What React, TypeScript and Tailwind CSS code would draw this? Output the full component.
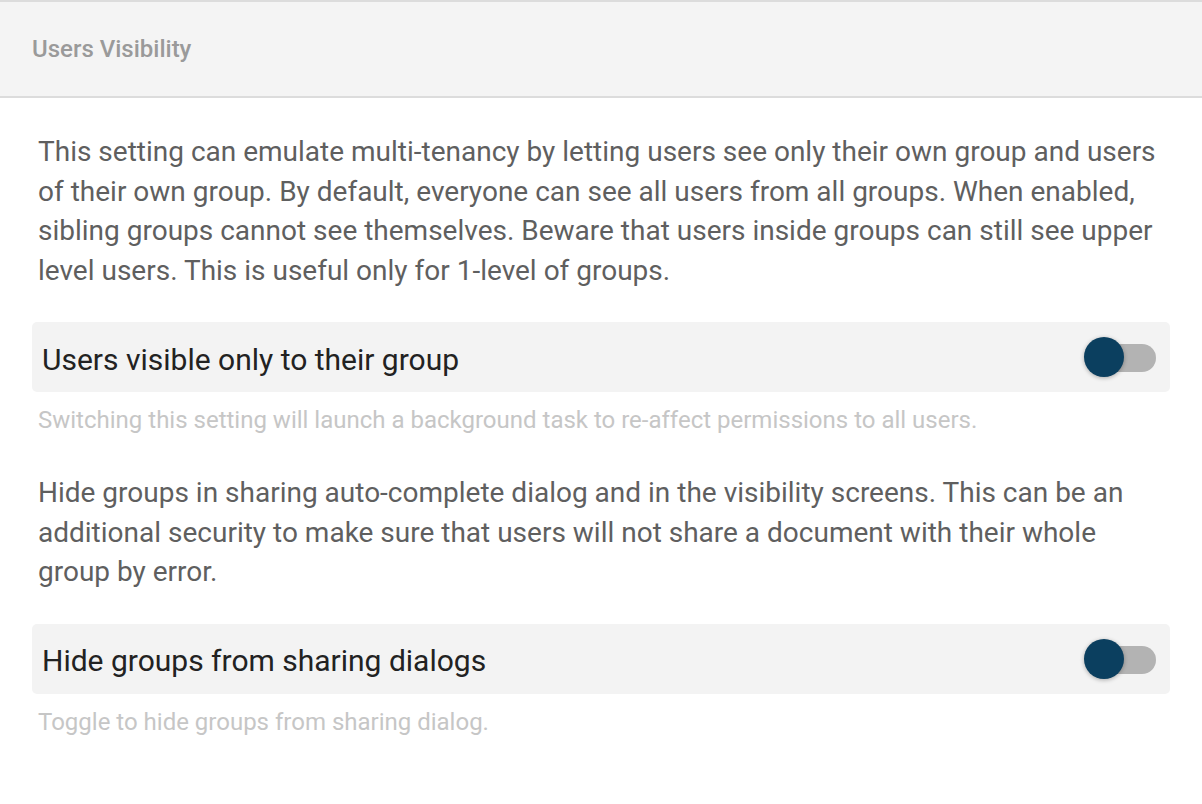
import { useState } from 'react';

type SettingRowProps = {
  label: string;
  help: string;
  checked: boolean;
  onToggle: () => void;
};

const Toggle = ({ checked, onToggle }: { checked: boolean; onToggle: () => void }) => (
  <button
    type="button"
    role="switch"
    aria-checked={checked}
    onClick={onToggle}
    className="relative w-[72px] h-[40px] shrink-0 cursor-pointer"
  >
    <span className="absolute right-0 top-[7px] w-[56px] h-[28px] rounded-full bg-[#b3b3b3]" />
    <span
      className={`absolute top-0 w-[40px] h-[40px] rounded-full bg-[#0b3f5f] shadow-[0_1px_4px_rgba(0,0,0,0.3)] transition-all ${checked ? 'left-[32px]' : 'left-0'}`}
    />
  </button>
);

const SettingRow = ({ label, help, checked, onToggle }: SettingRowProps) => (
  <div className="flex flex-col">
    <div className="flex items-center justify-between h-[70px] pl-[10px] pr-[14px] rounded-[5px] bg-[#f3f3f3]">
      <span className="pt-[5px] text-[30px] leading-[36px] text-[#222222]">{label}</span>
      <Toggle checked={checked} onToggle={onToggle} />
    </div>
    <p className="mt-[14px] px-[6px] text-[24px] leading-[28px] text-[#c6c6c6]">{help}</p>
  </div>
);

export default function App() {
  const [visibleToGroup, setVisibleToGroup] = useState(false);
  const [hideGroups, setHideGroups] = useState(false);

  return (
    <div className="w-[1202px] h-[804px] bg-white overflow-hidden" style={{ fontFamily: 'Roboto, "Noto Sans", sans-serif' }}>
      <div className="h-[98px] bg-[#f4f4f4] border-t-2 border-b-2 border-[#dcdcdc] flex items-center px-[32px]">
        <h2 className="text-[24px] font-medium text-[#9a9a9a]">Users Visibility</h2>
      </div>

      <div className="px-[32px] pt-[34px] flex flex-col">
        <p className="px-[6px] text-[28px] leading-[39.5px] text-[#5f5f5f]">
          This setting can emulate multi-tenancy by letting users see only their own group and users of their own group. By default, everyone can see all users from all groups. When enabled, sibling groups cannot see themselves. Beware that users inside groups can still see upper level users. This is useful only for 1-level of groups.
        </p>
        <div className="mt-[32px]">
          <SettingRow
            label="Users visible only to their group"
            help="Switching this setting will launch a background task to re-affect permissions to all users."
            checked={visibleToGroup}
            onToggle={() => setVisibleToGroup(!visibleToGroup)}
          />
        </div>

        <p className="mt-[39px] px-[6px] text-[28px] leading-[39.5px] text-[#5f5f5f]">
          Hide groups in sharing auto-complete dialog and in the visibility screens. This can be an additional security to make sure that users will not share a document with their whole group by error.
        </p>
        <div className="mt-[32px]">
          <SettingRow
            label="Hide groups from sharing dialogs"
            help="Toggle to hide groups from sharing dialog."
            checked={hideGroups}
            onToggle={() => setHideGroups(!hideGroups)}
          />
        </div>
      </div>
    </div>
  );
}
